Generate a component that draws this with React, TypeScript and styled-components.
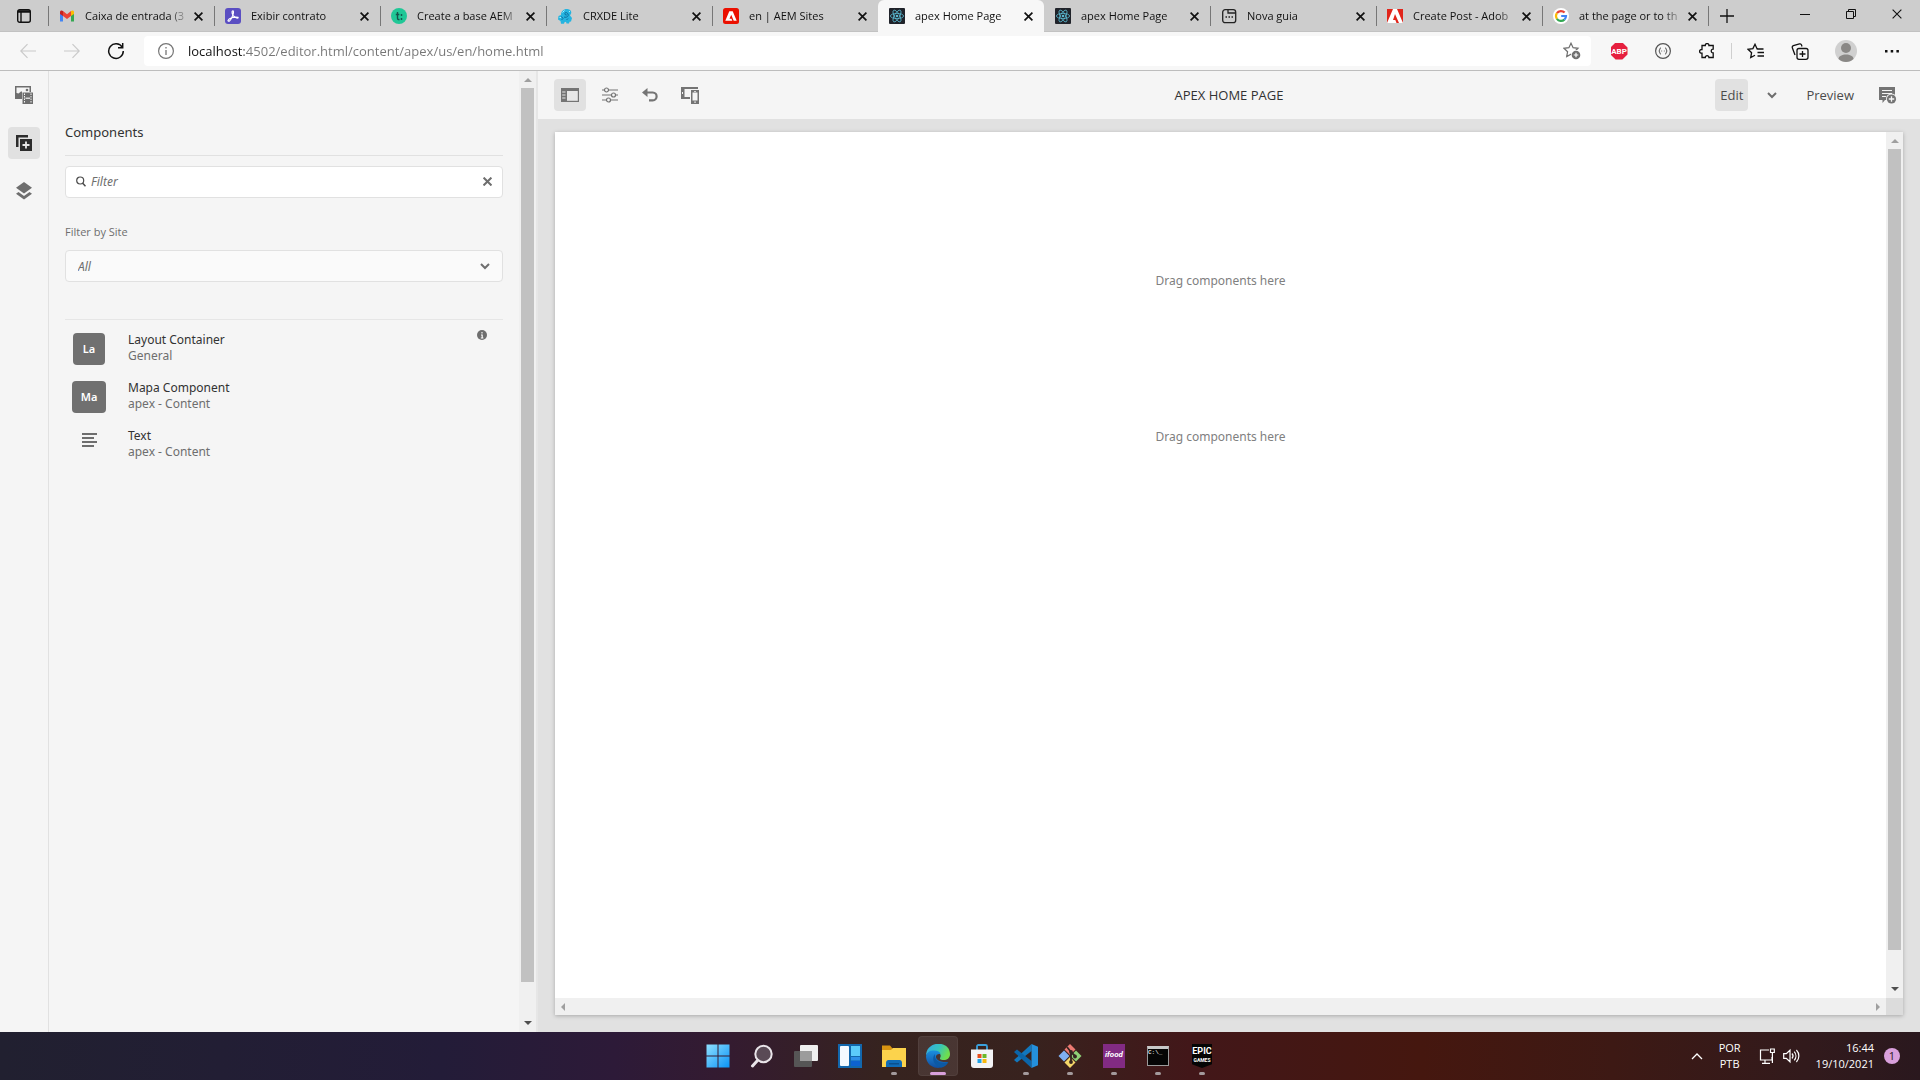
import React from "react";
import styled, { createGlobalStyle, css } from "styled-components";

const uiFont = `"Open Sans", "Noto Sans", sans-serif`;
const bodyFont = `"Noto Sans", "Open Sans", sans-serif`;

const GlobalStyle = createGlobalStyle`
  *, *::before, *::after { box-sizing: border-box; }
  body { margin: 0; overflow: hidden; font-family: ${bodyFont}; }
  button, input, select { font: inherit; color: inherit; }
  button { border: 0; padding: 0; background: none; cursor: pointer; }
  svg { display: block; flex: none; }
  h1, h2, p, ul { margin: 0; padding: 0; font-weight: 400; }
  ul { list-style: none; }
`;

/* ---------- browser chrome ---------- */

const Page = styled.div`
  display: flex;
  flex-direction: column;
  height: 100vh;
  background: #e1e1e1;
`;

const TabStrip = styled.header`
  display: flex;
  flex: none;
  height: 32px;
  background: #cdcdcd;
  box-shadow: inset 0 -1px 0 #c2c2c2;
  font-family: ${uiFont};
  font-size: 11px;
  color: #111;
`;

const TabMenuButton = styled.button`
  display: flex;
  align-items: center;
  justify-content: center;
  width: 48px;
`;

const TabList = styled.div`
  display: flex;
  min-width: 0;
`;

const Tab = styled.div<{ $active?: boolean; $divided?: boolean }>`
  display: flex;
  align-items: center;
  flex: 0 1 166px;
  min-width: 0;
  width: 166px;
  padding: 0 8px 0 11px;
  gap: 10px;
  background: linear-gradient(#777, #777) left 6px / 1px 20px no-repeat;
  background-size: ${(p) => (p.$divided ? "1px 20px" : "0 0")};
  ${(p) =>
    p.$active &&
    css`
      background: #f7f7f7;
      border-radius: 6px 6px 0 0;
    `}
`;

const TabTitle = styled.span`
  flex: 1;
  min-width: 0;
  white-space: nowrap;
  line-height: 20px;
  mask-image: linear-gradient(to right, #000 84px, transparent 105px);
`;

const TabClose = styled.button`
  display: flex;
  align-items: center;
  justify-content: center;
  width: 16px;
  height: 16px;
  margin-left: -10px;
`;

const NewTab = styled.button`
  display: flex;
  align-items: center;
  justify-content: center;
  width: 36px;
  border-left: 1px solid #777;
  height: 20px;
  margin-top: 6px;
`;

const WindowControls = styled.div`
  display: flex;
  margin-left: auto;
`;

const WindowButton = styled.button`
  display: flex;
  align-items: center;
  justify-content: center;
  width: 46px;
  height: 28px;
`;

const AddressRow = styled.nav`
  display: flex;
  align-items: center;
  flex: none;
  height: 39px;
  padding: 0 6px;
  background: #f7f7f7;
  border-bottom: 1px solid #bdbdbd;
`;

const NavButton = styled.button<{ $wide?: boolean }>`
  display: flex;
  align-items: center;
  justify-content: center;
  width: ${(p) => (p.$wide ? 48 : 44)}px;
  height: 30px;
`;

const AddressBox = styled.div`
  display: flex;
  align-items: center;
  flex: 1;
  min-width: 0;
  height: 30px;
  margin: 0 6px;
  padding: 0 10px 0 14px;
  border-radius: 4px;
  background: #fff;
`;

const AddressInput = styled.input`
  flex: 1;
  min-width: 0;
  height: 24px;
  margin-left: 14px;
  padding: 0;
  border: 0;
  outline: 0;
  font-family: ${uiFont};
  font-size: 13px;
  color: #767676;
  background: linear-gradient(to right, #111 0 56px, #767676 56px);
  background-clip: text;
  -webkit-text-fill-color: transparent;
`;

const ToolbarDivider = styled.span`
  width: 1px;
  height: 16px;
  margin: 0 2px;
  background: #cfcfcf;
`;

/* ---------- editor ---------- */

const Editor = styled.main`
  display: flex;
  flex: 1;
  min-height: 0;
  color: #4b4b4b;
  font-size: 12px;
`;

const Rail = styled.nav`
  display: flex;
  flex-direction: column;
  align-items: center;
  flex: none;
  gap: 16px;
  width: 49px;
  padding-top: 8px;
  background: #f5f5f5;
  border-right: 1px solid #e1e1e1;
`;

const IconButton = styled.button<{ $selected?: boolean }>`
  display: flex;
  align-items: center;
  justify-content: center;
  width: 32px;
  height: 32px;
  border-radius: 4px;
  color: ${(p) => (p.$selected ? "#2c2c2c" : "#6e6e6e")};
  background: ${(p) => (p.$selected ? "#e1e1e1" : "transparent")};
`;

const SidePanel = styled.aside`
  display: flex;
  flex: none;
  width: 489px;
  background: #f5f5f5;
  border-right: 2px solid #e6e6e6;
`;

const PanelContent = styled.div`
  flex: 1;
  min-width: 0;
  padding: 49px 16px 0;
`;

const PanelTitle = styled.h2`
  padding-bottom: 11px;
  border-bottom: 1px solid #e1e1e1;
  font-size: 13px;
  line-height: 24px;
  color: #323232;
`;

const SearchField = styled.label`
  display: flex;
  align-items: center;
  height: 32px;
  margin-top: 10px;
  padding: 0 10px 2px;
  border: 1px solid #e1e1e1;
  border-radius: 4px;
  background: #fff;
  color: #4b4b4b;
`;

const SearchInput = styled.input`
  flex: 1;
  min-width: 0;
  padding: 0 5px;
  border: 0;
  outline: 0;
  background: none;
  font-size: 12px;
  &::placeholder {
    color: #6e6e6e;
    opacity: 1;
    font-style: italic;
  }
`;

const FieldLabel = styled.label`
  display: block;
  margin: 24px 0 8px;
  font-family: ${uiFont};
  font-size: 11px;
  line-height: 20px;
  color: #6e6e6e;
`;

const SelectWrap = styled.div`
  display: grid;
  align-items: center;
  color: #6e6e6e;
  & > * {
    grid-area: 1 / 1;
  }
  & > svg {
    justify-self: end;
    margin-right: 12px;
    pointer-events: none;
  }
`;

const SiteSelect = styled.select`
  appearance: none;
  width: 100%;
  height: 32px;
  padding: 0 32px 0 12px;
  border: 1px solid #e1e1e1;
  border-radius: 4px;
  background: #fafafa;
  font-size: 12px;
  font-style: italic;
`;

const ComponentList = styled.ul`
  margin-top: 37px;
  padding-top: 6px;
  border-top: 1px solid #e6e6e6;
`;

const ComponentRow = styled.li`
  display: flex;
  height: 48px;
  padding: 6px 15px 0 0;
`;

const ComponentIcon = styled.span<{ $glyph?: boolean }>`
  display: flex;
  justify-content: center;
  flex: none;
  width: 48px;
  margin-right: 15px;
  padding-top: ${(p) => (p.$glyph ? 5 : 1)}px;
  color: #6e6e6e;
`;

const Monogram = styled.abbr`
  height: 32px;
  padding: 0 9px;
  min-width: 32px;
  border-radius: 4px;
  background: #707070;
  color: #fff;
  font-size: 11px;
  font-weight: 600;
  line-height: 32px;
  text-align: center;
`;

const ComponentText = styled.div`
  flex: 1;
  line-height: 16px;
  color: #6e6e6e;
`;

const ComponentName = styled.p`
  color: #323232;
`;

const InfoButton = styled.button`
  align-self: flex-start;
  display: flex;
  justify-content: center;
  width: 12px;
  height: 12px;
  margin-top: -3px;
  color: #6e6e6e;
`;

const Stage = styled.section`
  display: flex;
  flex-direction: column;
  flex: 1;
  min-width: 0;
`;

const Toolbar = styled.div`
  display: grid;
  grid-template-columns: 1fr auto 1fr;
  align-items: center;
  flex: none;
  height: 48px;
  padding: 0 16px;
  background: #f5f5f5;
  font-family: ${uiFont};
  font-size: 13px;
`;

const ToolGroup = styled.div<{ $end?: boolean }>`
  display: flex;
  align-items: center;
  justify-content: ${(p) => (p.$end ? "flex-end" : "flex-start")};
  gap: 8px;
`;

const PageTitle = styled.h1`
  font-size: 13px;
  color: #323232;
  text-transform: uppercase;
`;

const TextButton = styled.button<{ $selected?: boolean }>`
  height: 32px;
  padding: 0 5px;
  border-radius: 4px;
  background: ${(p) => (p.$selected ? "#e1e1e1" : "transparent")};
`;

const PreviewButton = styled(TextButton)`
  margin: 0 5px;
`;

const Frame = styled.div`
  display: grid;
  grid-template-columns: 1fr 17px;
  grid-template-rows: 1fr 17px;
  flex: 1;
  min-height: 0;
  margin: 13px 17px 17px;
  background: #fff;
  box-shadow: 0 1px 4px rgba(0, 0, 0, 0.25);
`;

const Canvas = styled.div`
  padding-top: 70px;
`;

const DropZone = styled.div`
  display: flex;
  align-items: center;
  justify-content: center;
  height: 156px;
  color: #808080;
`;

const VBar = styled.div`
  display: flex;
  flex-direction: column;
  align-items: center;
  flex: none;
  width: 17px;
  background: #f0f0f0;
`;

const HBar = styled.div`
  display: flex;
  justify-content: space-between;
  background: #f0f0f0;
`;

const Arrow = styled.span<{ $muted?: boolean }>`
  display: flex;
  align-items: center;
  justify-content: center;
  width: 17px;
  height: 17px;
  color: ${(p) => (p.$muted ? "#9f9f9f" : "#4f4f4f")};
`;

const Thumb = styled.span<{ $share: number }>`
  flex: ${(p) => p.$share};
  width: 13px;
  background: #c1c1c1;
`;

const ThumbRest = styled.span<{ $share: number }>`
  flex: ${(p) => p.$share};
`;

const Corner = styled.div`
  background: #dcdcdc;
`;

/* ---------- taskbar ---------- */

const Taskbar = styled.footer`
  display: grid;
  grid-template-columns: 1fr auto 1fr;
  flex: none;
  height: 48px;
  background: linear-gradient(
    to right,
    #212030 0%,
    #231c38 23%,
    #2d1a38 32%,
    #341b30 38%,
    #36231f 46%,
    #38221e 54%,
    #421719 62%,
    #45170f 74%,
    #3d1914 84%,
    #321a1c 94%,
    #2a181e 100%
  );
  color: #fff;
  font-family: ${uiFont};
  font-size: 11px;
`;

const Apps = styled.div`
  display: flex;
  grid-column: 2;
  align-items: center;
  gap: 4px;
`;

const AppButton = styled.button<{ $active?: boolean }>`
  display: flex;
  flex-direction: column;
  align-items: center;
  justify-content: flex-end;
  gap: 4px;
  width: 40px;
  height: 40px;
  padding-bottom: 1px;
  border-radius: 4px;
  ${(p) =>
    p.$active &&
    css`
      background: rgba(255, 255, 255, 0.09);
      box-shadow: inset 0 0 0 1px rgba(255, 255, 255, 0.05);
    `}
`;

const RunMark = styled.span<{ $kind: "none" | "open" | "focus" }>`
  height: 3px;
  width: ${(p) => (p.$kind === "focus" ? 16 : 6)}px;
  border-radius: 2px;
  background: ${(p) =>
    p.$kind === "focus" ? "#d9a0dc" : p.$kind === "open" ? "#a39a9c" : "transparent"};
`;

const Tray = styled.div`
  display: flex;
  align-items: center;
  justify-content: flex-end;
  padding-right: 20px;
  line-height: 16px;
`;

const TrayButton = styled.button<{ $gap?: number }>`
  margin-right: ${(p) => p.$gap ?? 0}px;
`;

const TrayText = styled.button<{ $align: "center" | "right"; $gap: number }>`
  display: flex;
  flex-direction: column;
  align-items: ${(p) => (p.$align === "right" ? "flex-end" : "center")};
  margin-right: ${(p) => p.$gap}px;
`;

const NoticeBadge = styled.button`
  width: 16px;
  height: 16px;
  border-radius: 50%;
  background: #d9a0dc;
  color: #2a181e;
  line-height: 16px;
`;

/* ---------- icons ---------- */

type SvgProps = { w: number; h?: number; box?: string; children: React.ReactNode };
const Svg = ({ w, h = w, box, children }: SvgProps) => (
  <svg width={w} height={h} viewBox={box ?? `0 0 ${w} ${h}`} fill="none" aria-hidden="true">
    {children}
  </svg>
);

const Cross = ({ size = 8, color = "#111", weight = 1.5 }) => (
  <Svg w={size} box="0 0 8 8">
    <path d="M.5.5l7 7M7.5.5l-7 7" stroke={color} strokeWidth={weight} />
  </Svg>
);

const Chevron = ({ up = false, weight = 2, color = "currentColor" }) => (
  <Svg w={12} h={8}>
    <path d={up ? "M1 7l5-5 5 5" : "M2 2l4 4 4-4"} stroke={color} strokeWidth={weight} />
  </Svg>
);

const Triangle = ({ dir }: { dir: "up" | "down" | "left" | "right" }) => {
  const d = { up: "M0 6l4-4 4 4z", down: "M0 1l4 4 4-4z", left: "M5 0v8L1 4z", right: "M2 0v8l4-4z" }[dir];
  return (
    <Svg w={8}>
      <path d={d} fill="currentColor" />
    </Svg>
  );
};

const Gmail = () => (
  <Svg w={16}>
    <path d="M1 4v9.500h3V7z" fill="#4285f4" />
    <path d="M15 4v9.500h-3V7z" fill="#34a853" />
    <path d="M1 4c0-1.700 1.800-2 3-1v5L1 6z" fill="#c5221f" />
    <path d="M15 4c0-1.700-1.800-2-3-1v5l3-2z" fill="#fbbc04" />
    <path d="M4 3l4 3.200L12 3v5l-4 3-4-3z" fill="#ea4335" />
  </Svg>
);
const Acrobat = () => (
  <Svg w={16}>
    <rect width="16" height="16" rx="3" fill="#5a4ec2" />
    <path d="M3 12.500c.8-2 6-4.200 10-3.200 1 1.300-3 1-5-2C6.500 4.800 7 2.500 8 2.800c1.500.8-1 8-3.500 10.200-.8.500-1.500.2-1.500-.5z" stroke="#fff" strokeWidth="1.200" />
  </Svg>
);
const Teal = () => (
  <Svg w={16}>
    <circle cx="8" cy="8" r="8" fill="#1fc796" />
    <path d="M6.500 4v6c0 1.300.8 1.800 2 1.500M4.800 6.500h3.500" stroke="#14524a" strokeWidth="1.400" />
    <circle cx="10.500" cy="7" r=".9" fill="#14524a" />
    <circle cx="10.500" cy="11" r=".9" fill="#14524a" />
  </Svg>
);
const Crx = () => (
  <Svg w={16}>
    <path d="M4 7C4 3 7 .500 10.500 1c2.500.300 4 2 3.800 4l-1.300 2.500L15 10l-1 3.500-1.500.3-.5 1.700H9.500L9 13.800l-1.500.4-.5 1.600H4L3.500 13 1 11.500 1.500 8z" fill="#25b4e0" />
    <path d="M7 9c3 1 5-1 4-3S7.500 4 8 6s2 1 2 .500M4.500 8.500l1.500 2-1.500 1.500M9.500 12l1.500-1.500" stroke="#0d6d9e" />
    <path d="M5.500 4.500l2-2M2.500 9.500h1.500M12 3l1 1" stroke="#a9ecfb" />
  </Svg>
);
const AemSites = () => (
  <Svg w={16}>
    <rect width="16" height="16" rx="2.500" fill="#eb1000" />
    <path d="M6.300 3.300h3.400l4 9.400h-3L8.200 6.800l-1.700 3.900h2l.8 2H2.300z" fill="#fff" />
  </Svg>
);
const ReactMark = () => (
  <Svg w={16}>
    <rect width="16" height="16" rx="1" fill="#20232a" />
    <g stroke="#5ab9d1" strokeWidth=".8">
      <ellipse cx="8" cy="8" rx="6.600" ry="2.600" />
      <ellipse cx="8" cy="8" rx="6.600" ry="2.600" transform="rotate(60 8 8)" />
      <ellipse cx="8" cy="8" rx="6.600" ry="2.600" transform="rotate(120 8 8)" />
    </g>
    <circle cx="8" cy="8" r="1.300" fill="#5ab9d1" />
  </Svg>
);
const NewGuide = () => (
  <Svg w={16}>
    <rect x="1.700" y="1.700" width="13" height="13" rx="2.500" stroke="#222" strokeWidth="1.300" />
    <path d="M7 2v3h7.500" stroke="#222" strokeWidth="1.300" />
    <path d="M4.500 9h1.500M7.500 9H9M10.500 9H12" stroke="#222" strokeWidth="1.600" />
  </Svg>
);
const AdobeMark = () => (
  <Svg w={16}>
    <rect y="1" width="16" height="14" fill="#fff" />
    <path d="M0 1h6L0 15zM16 1h-6l6 14zM8 6l4 9H9.500l-1.200-3H6z" fill="#e1251b" />
  </Svg>
);
const GoogleMark = () => (
  <Svg w={16}>
    <circle cx="8" cy="8" r="8" fill="#fff" />
    <g strokeWidth="2.200">
      <path d="M3.900 5.200A5 5 0 0 1 11.600 4.600" stroke="#ea4335" />
      <path d="M3.900 5.200a5 5 0 0 0 0 5.600" stroke="#fbbc05" />
      <path d="M3.900 10.800a5 5 0 0 0 7.500.800" stroke="#34a853" />
      <path d="M11.400 11.600A5 5 0 0 0 13 8H8.200" stroke="#4285f4" />
    </g>
  </Svg>
);

const TabActions = () => (
  <Svg w={16}>
    <rect x="1.700" y="1.700" width="12.600" height="12.600" rx="2" stroke="#111" strokeWidth="1.400" />
    <path d="M2 3.500h12" stroke="#111" strokeWidth="2.500" />
    <path d="M5 4v10" stroke="#111" strokeWidth="1.400" />
  </Svg>
);
const NavArrow = ({ back = false }) => (
  <Svg w={16}>
    <path d={back ? "M16 8H.8M7.500 1.200L.8 8l6.700 6.800" : "M0 8h15.200M8.500 1.200L15.200 8l-6.700 6.800"} stroke="#cacaca" strokeWidth="1.200" />
  </Svg>
);
const Reload = () => (
  <Svg w={18}>
    <path d="M15.200 5.200A7.300 7.300 0 1 0 16.300 9M15.700 1v4.700H11" stroke="#111" strokeWidth="1.500" />
  </Svg>
);
const InfoRing = () => (
  <Svg w={16}>
    <circle cx="8" cy="8" r="7.400" stroke="#767676" strokeWidth="1.200" />
    <path d="M8 7v5M8 4v1.500" stroke="#767676" strokeWidth="1.300" />
  </Svg>
);
const starPath = "M8 1.200l2.100 4.500 4.900.600-3.600 3.400.9 4.900L8 12.200l-4.300 2.400.9-4.900L1 6.300l4.900-.600z";
const StarAdd = () => (
  <Svg w={18}>
    <path d={starPath} stroke="#6e6e6e" strokeWidth="1.200" />
    <circle cx="13" cy="13" r="5" fill="#fff" />
    <circle cx="13" cy="13" r="4.300" fill="#6e6e6e" />
    <path d="M13 10.700v4.600M10.700 13h4.600" stroke="#fff" strokeWidth="1.200" />
  </Svg>
);
const AbpSign = styled.span`
  width: 17px;
  height: 17px;
  clip-path: polygon(30% 0, 70% 0, 100% 30%, 100% 70%, 70% 100%, 30% 100%, 0 70%, 0 30%);
  background: #e6203f;
  color: #fff;
  font: 700 8px/17px Roboto, sans-serif;
  text-align: center;
`;
const Braces = () => (
  <Svg w={16}>
    <circle cx="8" cy="8" r="7.400" stroke="#555" strokeWidth="1.200" />
    <path d="M6 4.800c-1.500 0-.8 2-2 3.200 1.200 1.200.5 3.200 2 3.200M10 4.800c1.500 0 .8 2 2 3.200-1.200 1.200-.5 3.200-2 3.200M6.300 8h.8M8.900 8h.8" stroke="#555" />
  </Svg>
);
const Puzzle = () => (
  <Svg w={16}>
    <path d="M3 2.500h3.300c-.3-2.600 3.900-2.600 3.600 0h4.300v3.600c-2.600-.4-2.600 4.200 0 3.800v4.600H9.900c.3-2.400-3.900-2.400-3.600 0H3v-4.300c-3.200.3-3.200-4 0-3.700z" stroke="#111" strokeWidth="1.300" />
  </Svg>
);
const Favorites = () => (
  <Svg w={18} h={16}>
    <path d="M10.800 5.600L9.900 5.500 8 1.300 5.900 5.600l-4.800.700L4.600 9.700l-.9 4.900L8 12.300M9.500 6h7M10.500 9.500H17M10.500 13H17" stroke="#111" strokeWidth="1.300" />
  </Svg>
);
const Collections = () => (
  <Svg w={18} h={17}>
    <path d="M4 12l-2.600-7c-.4-1 0-1.900 1-2.300L8.500.900c1-.3 1.700.1 2 1L11 3.500" stroke="#111" strokeWidth="1.300" />
    <rect x="6" y="5.500" width="11" height="10.800" rx="2" stroke="#111" strokeWidth="1.300" />
    <path d="M11.500 8v6M8.500 11h6" stroke="#111" strokeWidth="1.300" />
  </Svg>
);
const Avatar = () => (
  <Svg w={22}>
    <circle cx="11" cy="11" r="11" fill="#d0d0d0" />
    <circle cx="11" cy="8" r="5" fill="#8a8886" />
    <path d="M3.500 19c0-6 15-6 15 0-4 4-11 4-15 0z" fill="#8a8886" />
  </Svg>
);
const Dots = () => (
  <Svg w={14} h={4}>
    <path d="M0 1h2.500v2.500H0zM5.700 1h2.500v2.500H5.700zM11.400 1h2.500v2.500h-2.500z" fill="#111" />
  </Svg>
);

const Assets = () => (
  <Svg w={18}>
    <path d="M0 0h16v6h-1.500V1.500h-13v5L0 13z" fill="currentColor" />
    <path d="M0 6.500L3.500 7.500 6 5.500h1V13H0z" fill="currentColor" />
    <circle cx="12" cy="4" r="1.300" fill="currentColor" />
    <path d="M7.500 6.500H18V18H7.500z" fill="currentColor" />
    <path d="M9.500 7.500v10M16 7.500v10" stroke="#f5f5f5" strokeDasharray="1.500 1" />
    <path d="M10.500 12.200h4.500" stroke="#f5f5f5" strokeWidth="1.200" />
  </Svg>
);
const AddComponents = () => (
  <Svg w={16}>
    <path d="M0 0h12v2.500H2.500V12H0z" fill="currentColor" />
    <path d="M4 4h12v12H4z" fill="currentColor" />
    <path d="M10 6.500v7M6.500 10h7" stroke="#e8e8e8" strokeWidth="1.800" />
  </Svg>
);
const Layers = () => (
  <Svg w={16} h={18}>
    <path d="M8 0l8 5.800-8 5.700-8-5.700zM0 11.700L2.500 10 8 13.900 13.500 10l2.500 1.700L8 17.500z" fill="currentColor" />
  </Svg>
);
const Magnifier = () => (
  <Svg w={10} h={11}>
    <circle cx="4.200" cy="4.500" r="3.500" stroke="currentColor" strokeWidth="1.200" />
    <path d="M6.500 7l3 3.300" stroke="currentColor" strokeWidth="1.500" />
  </Svg>
);
const TextLines = () => (
  <Svg w={15} h={14}>
    <path d="M0 1h15M0 5h12M0 9h15M0 13h12" stroke="currentColor" strokeWidth="1.800" />
  </Svg>
);
const InfoSolid = () => (
  <Svg w={10} h={12}>
    <circle cx="5" cy="6" r="5" fill="currentColor" />
    <path d="M5 3v1.500M4 6h1.200v2.800M3.800 9h2.600" stroke="#fff" strokeWidth="1.100" />
  </Svg>
);
const RailToggle = () => (
  <Svg w={18} h={14}>
    <path d="M0 0h18v14H0z" fill="#747474" />
    <path d="M6 3h10.800v9.800H6z" fill="#e8e8e8" />
    <path d="M1.200 4h3.300M1.200 7h3.300M1.200 10h3.300" stroke="#e8e8e8" />
  </Svg>
);
const Sliders = () => (
  <Svg w={16} h={16}>
    <path d="M0 3h2.500M6.500 3H16M0 8h9.500M13.500 8H16M0 13h4.500M8.500 13H16" stroke="#747474" strokeWidth="1.200" />
    <g stroke="#747474" strokeWidth="1.200">
      <circle cx="4.500" cy="3" r="2" />
      <circle cx="11.500" cy="8" r="2" />
      <circle cx="6.500" cy="13" r="2" />
    </g>
  </Svg>
);
const Undo = () => (
  <Svg w={16} h={14}>
    <path d="M3.500 4.500h7.200c5.200 0 5.200 7.800 0 7.800H7" stroke="#747474" strokeWidth="2.200" />
    <path d="M5.500 0v9L0 4.500z" fill="#747474" />
  </Svg>
);
const Emulator = () => (
  <Svg w={18} h={18}>
    <path d="M0 1h17v2H3.500v8H9v2H0zM1 6v2h1V6z" fill="#747474" fillRule="evenodd" />
    <path d="M10 4h8v14h-8zM11.500 6.500v8h5v-8zM13 5v.700h2V5zM13.300 15.500v1.300h1.500v-1.300z" fill="#747474" fillRule="evenodd" />
  </Svg>
);
const Annotate = () => (
  <Svg w={18} h={18}>
    <path d="M0 1h16v8h-2.500L8 14H6l-2.500 3v-3H0z" fill="#747474" />
    <path d="M3 4.500h10M3 7.500h10M3 10.500h4" stroke="#f5f5f5" strokeWidth="1.200" />
    <circle cx="12.500" cy="13" r="5.500" fill="#f5f5f5" />
    <circle cx="12.500" cy="13" r="4.600" fill="#747474" />
    <path d="M12.500 10.300v5.400M9.800 13h5.400" stroke="#f5f5f5" strokeWidth="1.300" />
  </Svg>
);

const StartIcon = () => (
  <Svg w={24}>
    <defs>
      <linearGradient id="start" x1="0" y1="0" x2="1" y2="1">
        <stop stopColor="#8fe0ff" />
        <stop offset="1" stopColor="#0a93f5" />
      </linearGradient>
    </defs>
    <path d="M.5.5h11v11H.5zM12.500.5h11v11h-11zM.5 12.500h11v11H.5zM12.500 12.500h11v11h-11z" fill="url(#start)" />
  </Svg>
);
const SearchIcon = () => (
  <Svg w={24}>
    <circle cx="13.500" cy="10" r="8.200" fill="#5a4a56" stroke="#e9e4e9" strokeWidth="2" />
    <path d="M7.500 16.500L2.500 22" stroke="#e9e4e9" strokeWidth="3" strokeLinecap="round" />
  </Svg>
);
const TaskView = () => (
  <Svg w={24}>
    <rect x="6" y="1" width="18" height="16" rx="1" fill="#efefef" />
    <rect x="0" y="7" width="18" height="16" rx="1" fill="#565656" />
    <path d="M6 7h12v10H6z" fill="#9c9c9c" />
  </Svg>
);
const Widgets = () => (
  <Svg w={24}>
    <path d="M0 0h24v24H0z" fill="#1267ad" />
    <rect x="2" y="2" width="9" height="20" rx="1" fill="#f4f9ff" />
    <path d="M13 2h9v10h-9z" fill="#5ccbfa" />
    <path d="M13 13h9v3.500h-9z" fill="#2d8fe8" />
    <path d="M13 17h9v5h-9z" fill="#0d62d0" />
  </Svg>
);
const Explorer = () => (
  <Svg w={24}>
    <path d="M0 1.500h8l2.500 3H24v9H0z" fill="#d99411" />
    <path d="M0 6h9l2-2h13v19H0z" fill="#fcd34c" />
    <path d="M4 23v-4c0-2 1-3 2.500-3h11c1.500 0 2.500 1 2.500 3v4z" fill="#0f6cb8" />
    <path d="M7 19h10v1.500H7z" fill="#0a508f" />
  </Svg>
);
const EdgeIcon = () => (
  <Svg w={24}>
    <defs>
      <linearGradient id="edgeTop" x1="0" y1="0" x2="1" y2=".4">
        <stop stopColor="#35a7e8" />
        <stop offset=".55" stopColor="#35c3bd" />
        <stop offset="1" stopColor="#6fde4d" />
      </linearGradient>
      <linearGradient id="edgeBody" x1="0" y1="0" x2="0" y2="1">
        <stop stopColor="#1b8fe0" />
        <stop offset="1" stopColor="#114e9f" />
      </linearGradient>
    </defs>
    <path d="M0 12C0-4 24-4 24 10c0 5-4 6.500-7.500 6-2.500-.4-3-1.400-2.200-2.500C16 10 12 7.500 8.500 8 4 8 1 9 0 12z" fill="url(#edgeTop)" />
    <path d="M0 12c1-4 4-6 8-5.500C12 6.500 14 8 14.500 10c-7-1-7 9 7.500 8-4 7-12 7-16.500 4C2 20 0 16 0 12z" fill="url(#edgeBody)" />
    <path d="M9 10c-4 4-1 12.500 6 13.500 3-.5 5.500-2 7.500-5.500C14 21 8 16 9 10z" fill="#0c59a4" />
  </Svg>
);
const StoreIcon = () => (
  <Svg w={24}>
    <path d="M7 7V2.500C7 1.500 7.500 1 8.500 1h7c1 0 1.500.5 1.500 1.500V7" stroke="#3aa0dc" strokeWidth="1.800" />
    <path d="M1 5.500h22V21c0 2-1 3-3 3H4c-2 0-3-1-3-3z" fill="#f4f4f6" />
    <path d="M7.500 10h4v4h-4z" fill="#e84e1c" />
    <path d="M12.500 10h4v4h-4z" fill="#6bb92a" />
    <path d="M7.500 15h4v4h-4z" fill="#1fa4ea" />
    <path d="M12.500 15h4v4h-4z" fill="#f8b80e" />
  </Svg>
);
const CodeIcon = () => (
  <Svg w={24}>
    <path d="M17.500 0v7L3 18.500 0 16z" fill="#1277bd" />
    <path d="M0 8l3-2.500L17.500 17v7z" fill="#0b65a9" />
    <path d="M17.500 0L24 2.800v18.400L17.500 24V0z" fill="#2490dc" />
  </Svg>
);
const GitIcon = () => (
  <Svg w={24}>
    <path d="M12 0l5.500 5.500L12 11 6.500 5.500z" fill="#ec7a72" />
    <path d="M6 6.500l5.500 5.500L6 17.500.5 12z" fill="#7fb0f2" />
    <path d="M18 6.500l5.500 5.500-5.500 5.500-5.500-5.500z" fill="#8fd077" />
    <path d="M12 13l5.500 5.500L12 24l-5.500-5.500z" fill="#f5d668" />
    <path d="M9 3l4 5v10M13 8l4 4" stroke="#332320" strokeWidth="1.800" />
    <circle cx="13" cy="8" r="1.900" fill="#332320" />
    <circle cx="17" cy="12.500" r="1.900" fill="#332320" />
    <circle cx="13" cy="18" r="1.900" fill="#332320" />
  </Svg>
);
const FoodTile = styled.span`
  width: 22px;
  height: 24px;
  background: #822b83;
  color: #fff;
  font: italic 700 8px/22px Roboto, sans-serif;
  text-align: center;
`;
const TerminalTile = styled.span`
  width: 22px;
  height: 20px;
  margin-bottom: 2px;
  border: 1px solid #9a9a9a;
  border-top: 3px solid #c8c8c8;
  background: #050505;
  color: #ddd;
  font: 700 6px/8px "Liberation Mono", monospace;
  text-align: left;
`;
const EpicTile = styled.span`
  display: flex;
  flex-direction: column;
  align-items: center;
  width: 20px;
  height: 24px;
  padding-top: 2px;
  clip-path: polygon(0 0, 100% 0, 100% 84%, 50% 100%, 0 84%);
  background: #050505;
  color: #fff;
  font: 700 9px/11px Roboto, sans-serif;
  & > small {
    font-size: 5px;
    line-height: 6px;
  }
`;

/* ---------- data ---------- */

const tabs = [
  { title: "Caixa de entrada (3", icon: <Gmail /> },
  { title: "Exibir contrato", icon: <Acrobat /> },
  { title: "Create a base AEM", icon: <Teal /> },
  { title: "CRXDE Lite", icon: <Crx /> },
  { title: "en | AEM Sites", icon: <AemSites /> },
  { title: "apex Home Page", icon: <ReactMark />, active: true },
  { title: "apex Home Page", icon: <ReactMark /> },
  { title: "Nova guia", icon: <NewGuide /> },
  { title: "Create Post - Adob", icon: <AdobeMark /> },
  { title: "at the page or to th", icon: <GoogleMark /> },
];

const components = [
  { name: "Layout Container", group: "General", mark: "La", info: true },
  { name: "Mapa Component", group: "apex - Content", mark: "Ma" },
  { name: "Text", group: "apex - Content" },
];

type Run = "none" | "open" | "focus";
const apps: { name: string; icon: React.ReactNode; run: Run }[] = [
  { name: "Start", icon: <StartIcon />, run: "none" },
  { name: "Search", icon: <SearchIcon />, run: "none" },
  { name: "Task view", icon: <TaskView />, run: "none" },
  { name: "Widgets", icon: <Widgets />, run: "none" },
  { name: "File Explorer", icon: <Explorer />, run: "open" },
  { name: "Edge", icon: <EdgeIcon />, run: "focus" },
  { name: "Store", icon: <StoreIcon />, run: "none" },
  { name: "Code", icon: <CodeIcon />, run: "open" },
  { name: "Git", icon: <GitIcon />, run: "open" },
  { name: "iFood", icon: <FoodTile>ifood</FoodTile>, run: "open" },
  { name: "Terminal", icon: <TerminalTile>C:\_</TerminalTile>, run: "open" },
  { name: "Epic Games", icon: <EpicTile>EPIC<small>GAMES</small></EpicTile>, run: "open" },
];

/* ---------- sections ---------- */

const VerticalScrollbar = ({ share, rest }: { share: number; rest: number }) => (
  <VBar>
    <Arrow $muted><Triangle dir="up" /></Arrow>
    <Thumb $share={share} />
    <ThumbRest $share={rest} />
    <Arrow><Triangle dir="down" /></Arrow>
  </VBar>
);

const BrowserTabs = () => (
  <TabStrip>
    <TabMenuButton aria-label="Tab actions"><TabActions /></TabMenuButton>
    <TabList>
      {tabs.map((t, i) => (
        <Tab key={i} $active={t.active} $divided={!t.active && !tabs[i - 1]?.active}>
          {t.icon}
          <TabTitle>{t.title}</TabTitle>
          <TabClose aria-label="Close tab"><Cross size={9} /></TabClose>
        </Tab>
      ))}
    </TabList>
    <NewTab aria-label="New tab">
      <Svg w={14}><path d="M7 0v14M0 7h14" stroke="#111" strokeWidth="1.300" /></Svg>
    </NewTab>
    <WindowControls>
      <WindowButton aria-label="Minimize">
        <Svg w={10}><path d="M0 5.500h10" stroke="#111" /></Svg>
      </WindowButton>
      <WindowButton aria-label="Restore">
        <Svg w={10}><path d="M.5 2.500h7v7h-7zM2.500 2.500v-2h7v7h-2" stroke="#111" /></Svg>
      </WindowButton>
      <WindowButton aria-label="Close"><Cross size={10} weight={0.9} /></WindowButton>
    </WindowControls>
  </TabStrip>
);

const AddressBar = () => (
  <AddressRow>
    <NavButton aria-label="Back"><NavArrow back /></NavButton>
    <NavButton aria-label="Forward"><NavArrow /></NavButton>
    <NavButton aria-label="Reload"><Reload /></NavButton>
    <AddressBox>
      <InfoRing />
      <AddressInput aria-label="Address" defaultValue="localhost:4502/editor.html/content/apex/us/en/home.html" />
      <button aria-label="Add to favorites"><StarAdd /></button>
    </AddressBox>
    <NavButton><AbpSign>ABP</AbpSign></NavButton>
    <NavButton aria-label="JSON viewer"><Braces /></NavButton>
    <NavButton aria-label="Extensions"><Puzzle /></NavButton>
    <ToolbarDivider />
    <NavButton aria-label="Favorites"><Favorites /></NavButton>
    <NavButton aria-label="Collections"><Collections /></NavButton>
    <NavButton aria-label="Profile" $wide><Avatar /></NavButton>
    <NavButton aria-label="Settings"><Dots /></NavButton>
  </AddressRow>
);

const ComponentsPanel = () => (
  <SidePanel>
    <PanelContent>
      <PanelTitle>Components</PanelTitle>
      <SearchField>
        <Magnifier />
        <SearchInput aria-label="Filter" placeholder="Filter" />
        <button aria-label="Clear"><Cross size={9} color="#6e6e6e" weight={1.8} /></button>
      </SearchField>
      <FieldLabel htmlFor="site">Filter by Site</FieldLabel>
      <SelectWrap>
        <SiteSelect id="site"><option>All</option></SiteSelect>
        <Chevron />
      </SelectWrap>
      <ComponentList>
        {components.map((c) => (
          <ComponentRow key={c.name}>
            <ComponentIcon $glyph={!c.mark}>
              {c.mark ? <Monogram>{c.mark}</Monogram> : <TextLines />}
            </ComponentIcon>
            <ComponentText>
              <ComponentName>{c.name}</ComponentName>
              <p>{c.group}</p>
            </ComponentText>
            {c.info && <InfoButton aria-label="Information"><InfoSolid /></InfoButton>}
          </ComponentRow>
        ))}
      </ComponentList>
    </PanelContent>
    <VerticalScrollbar share={894} rest={33} />
  </SidePanel>
);

const EditorStage = () => (
  <Stage>
    <Toolbar>
      <ToolGroup>
        <IconButton $selected aria-label="Toggle side panel"><RailToggle /></IconButton>
        <IconButton aria-label="Page information"><Sliders /></IconButton>
        <IconButton aria-label="Undo"><Undo /></IconButton>
        <IconButton aria-label="Emulator"><Emulator /></IconButton>
      </ToolGroup>
      <PageTitle>Apex Home Page</PageTitle>
      <ToolGroup $end>
        <TextButton $selected>Edit</TextButton>
        <IconButton aria-label="Modes"><Chevron /></IconButton>
        <PreviewButton>Preview</PreviewButton>
        <IconButton aria-label="Annotate"><Annotate /></IconButton>
      </ToolGroup>
    </Toolbar>
    <Frame>
      <Canvas>
        <DropZone>Drag components here</DropZone>
        <DropZone>Drag components here</DropZone>
      </Canvas>
      <VerticalScrollbar share={801} rest={31} />
      <HBar>
        <Arrow $muted><Triangle dir="left" /></Arrow>
        <Arrow $muted><Triangle dir="right" /></Arrow>
      </HBar>
      <Corner />
    </Frame>
  </Stage>
);

const SystemTaskbar = () => (
  <Taskbar>
    <Apps>
      {apps.map((a) => (
        <AppButton key={a.name} aria-label={a.name} $active={a.run === "focus"}>
          {a.icon}
          <RunMark $kind={a.run} />
        </AppButton>
      ))}
    </Apps>
    <Tray>
      <TrayButton aria-label="Hidden icons" $gap={16}><Chevron up weight={1.3} /></TrayButton>
      <TrayText $align="center" $gap={18}><span>POR</span><span>PTB</span></TrayText>
      <TrayButton aria-label="Network" $gap={8}>
        <Svg w={16}>
          <path d="M10 2H1.500v10H13V9M6 12v3M3 15.400h8M11.500 1h3.800v3.500h-3.800zM13.400 4.500V15" stroke="#fff" strokeWidth="1.200" />
        </Svg>
      </TrayButton>
      <TrayButton aria-label="Volume" $gap={16}>
        <Svg w={17} h={16}>
          <path d="M.7 5.700h2.600L7 2.200v11.600l-3.700-3.500H.7zM9 5.500c1.300 1.500 1.300 3.500 0 5M11.200 3.700c2.300 2.500 2.300 6.100 0 8.600M13.400 2c3.300 3.500 3.300 8.500 0 12" stroke="#fff" strokeWidth="1.200" />
        </Svg>
      </TrayButton>
      <TrayText $align="right" $gap={10}><span>16:44</span><span>19/10/2021</span></TrayText>
      <NoticeBadge>1</NoticeBadge>
    </Tray>
  </Taskbar>
);

export default function App() {
  return (
    <Page>
      <GlobalStyle />
      <BrowserTabs />
      <AddressBar />
      <Editor>
        <Rail>
          <IconButton aria-label="Assets"><Assets /></IconButton>
          <IconButton $selected aria-label="Components"><AddComponents /></IconButton>
          <IconButton aria-label="Content tree"><Layers /></IconButton>
        </Rail>
        <ComponentsPanel />
        <EditorStage />
      </Editor>
      <SystemTaskbar />
    </Page>
  );
}
